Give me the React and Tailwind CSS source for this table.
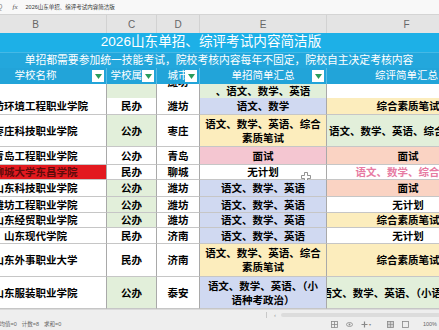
import React from "react";

const GREEN = "bg-[#e2efda]";
const BLUE = "bg-[#d0d9f1]";
const YELLOW = "bg-[#fcedbd]";
const PINK = "bg-[#f4c6d1]";
const SALMON = "bg-[#fad3c3]";
const WHITE = "bg-white";

const rows = [
  { h: "h-[14px]", name: "", type: "", city: "潍坊", cityCut: true, c: GREEN, e: ["、语文、数学、英语"], eBg: GREEN, f: [], fBg: WHITE },
  { h: "h-[17px]", name: "潍坊环境工程职业学院", type: "民办", city: "潍坊", c: WHITE, e: ["语文、数学"], eBg: BLUE, f: ["综合素质笔试"], fBg: YELLOW },
  { h: "h-[32px]", name: "枣庄科技职业学院", type: "公办", city: "枣庄", c: GREEN, e: ["语文、数学、英语、综合", "素质笔试"], eBg: YELLOW, f: ["语文、数学、英语、综合素质笔试"], fBg: GREEN, fLeft: true },
  { h: "h-[18px]", name: "青岛工程职业学院", type: "公办", city: "青岛", c: WHITE, e: ["面试"], eBg: PINK, f: ["面试"], fBg: SALMON },
  { h: "h-[15px]", name: "聊城大学东昌学院", red: true, type: "民办", city: "聊城", c: WHITE, e: ["无计划"], eBg: WHITE, f: ["语文、数学、综合素质"], fBg: WHITE, fPink: true, cursor: true },
  { h: "h-[17px]", name: "山东科技职业学院", type: "公办", city: "潍坊", c: GREEN, e: ["语文、数学、英语"], eBg: BLUE, f: ["面试"], fBg: SALMON },
  { h: "h-[16px]", name: "潍坊工程职业学院", type: "公办", city: "潍坊", c: GREEN, e: ["语文、数学、英语"], eBg: BLUE, f: ["无计划"], fBg: WHITE },
  { h: "h-[15px]", name: "山东经贸职业学院", type: "公办", city: "潍坊", c: GREEN, e: ["语文、数学、英语"], eBg: BLUE, f: ["综合素质笔试"], fBg: YELLOW },
  { h: "h-[16px]", name: "山东现代学院", type: "民办", city: "济南", c: WHITE, e: ["语文、数学、英语"], eBg: BLUE, f: ["无计划"], fBg: WHITE },
  { h: "h-[33px]", name: "山东外事职业大学", type: "民办", city: "济南", c: WHITE, e: ["语文、数学、英语、综合", "素质笔试"], eBg: YELLOW, f: ["综合素质笔试"], fBg: YELLOW },
  { h: "h-[32px]", name: "山东服装职业学院", type: "公办", city: "泰安", c: GREEN, e: ["语文、数学、英语、（小", "语种考政治）"], eBg: BLUE, f: ["语文、数学、英语、（小语种考政治）"], fBg: GREEN },
];

const COLS = "grid grid-cols-[142px_50px_43px_127px_160px]";
const CELL = "flex flex-col justify-center overflow-hidden whitespace-nowrap border-r border-b border-r-[#a9a9a9] border-b-[#c6c6c6] leading-[14px]";

function Filter() {
  return (
    <span className="absolute right-[2px] top-[2px] flex h-[12px] w-[12px] items-center justify-center bg-white">
      <svg width="7" height="5" viewBox="0 0 7 5">
        <path d="M0 0h7L3.5 5z" fill="#2a9c5c" />
      </svg>
    </span>
  );
}

function Lines({ lines }) {
  return lines.map((t, i) => <span key={i}>{t}</span>);
}

export default function App() {
  return (
    <div className="flex h-[330px] w-[439px] flex-col overflow-hidden bg-white font-['Liberation_Sans','Noto_Sans_CJK_SC',sans-serif]">
      {/* formula bar */}
      <div className="flex h-[15px] shrink-0 items-center border-b border-[#d4d4d4] bg-[#f8f8f8] text-[#333]">
        <span className="ml-[-3px] text-[7px] text-[#888]">Q</span>
        <span className="ml-[10px] font-['Liberation_Serif',serif] text-[7px] italic text-[#555]">fx</span>
        <span className="ml-[8px] text-[5.5px]">2026山东单招、综评考试内容简洁版</span>
      </div>

      <div className="flex-1 overflow-hidden">
        <div className="ml-[-35px] w-[522px]">
          {/* column letters */}
          <div className={`${COLS} h-[18px] bg-[#e4e4e4] text-[10px] text-[#666]`}>
            {["B", "C", "D", "E", "F"].map((l) => (
              <div key={l} className="flex items-center justify-center border-r border-[#d2d2d2]">{l}</div>
            ))}
          </div>

          {/* title */}
          <div className="flex h-[19px] items-center justify-center bg-[#1db0e7] pr-[30px] text-[13.6px] text-white">
            2026山东单招、综评考试内容简洁版
          </div>
          <div className="flex h-[16px] items-center justify-center border-t border-[#45b9e6] bg-[#23a7dc] pr-[14px] text-[10.8px] text-white">
            单招都需要参加统一技能考试，院校考核内容每年不固定，院校自主决定考核内容
          </div>

          {/* header */}
          <div className={`${COLS} h-[16px] bg-[#22a4d9] text-[10.5px] text-white`}>
            {["学校名称", "学校属性", "城市", "单招简单汇总", "综评简单汇总"].map((t, i) => (
              <div key={t} className="relative flex items-center justify-center overflow-hidden whitespace-nowrap border-r border-[#5cbde4]">
                {t}
                {i < 4 && <Filter />}
              </div>
            ))}
          </div>

          {/* data rows */}
          {rows.map((r, i) => (
            <div key={i} className={`${COLS} ${r.h} text-[10.5px] font-bold text-black`}>
              <div className={`${CELL} items-center ${r.red ? "bg-[#e3191f] text-[#5e0b0b]" : "bg-white"}`}>{r.name}</div>
              <div className={`${CELL} items-center ${r.c}`}>{r.type}</div>
              <div className={`${CELL} items-center bg-white ${r.cityCut ? "justify-start" : ""}`}>
                <span className={r.cityCut ? "mt-[-9px]" : ""}>{r.city}</span>
              </div>
              <div className={`${CELL} relative items-center overflow-visible ${r.eBg}`}>
                <Lines lines={r.e} />
                {r.cursor && (
                  <svg className="absolute left-[101px] top-[7px]" width="10" height="10" viewBox="0 0 10 10">
                    <path d="M3.5 0.5h3v3h3v3h-3v3h-3v-3h-3v-3h3z" fill="#fff" stroke="#777" strokeWidth="0.8" />
                  </svg>
                )}
              </div>
              <div className={`${CELL} ${r.fLeft ? "items-start pl-[2px]" : "items-center pl-[3px]"} ${r.fBg} ${r.fPink ? "text-[#e77aa2]" : ""}`}>
                <Lines lines={r.f} />
              </div>
            </div>
          ))}
        </div>
      </div>

      {/* bottom bars */}
      <div className="h-[21px] shrink-0 bg-[#eeeeee]">
        <div className="flex h-[10px] items-center border-t border-[#dadada] pl-[266px]">
          <span className="h-[6px] w-px bg-[#c8c8c8]" />
          <span className="ml-[7px] text-[6px] leading-none text-[#999]">‹</span>
          <span className="ml-[5px] h-[4px] flex-1 rounded-l-full bg-[#dcdcdc]" />
        </div>
        <div className="flex h-[11px] items-center text-[5.5px] text-[#666]">
          <span className="ml-[-6px]">平均值=0</span>
          <span className="ml-[5px]">计数=8</span>
          <span className="ml-[5px]">求和=0</span>
          <div className="ml-auto flex items-center gap-[8px] pr-[2px] text-[#888]">
            <svg width="7" height="7" viewBox="0 0 7 7"><rect x="0.5" y="0.5" width="6" height="6" fill="none" stroke="#888" strokeWidth="0.8" /><path d="M0.5 3.5h6M3.5 0.5v6" stroke="#888" strokeWidth="0.8" /></svg>
            <svg width="7" height="7" viewBox="0 0 7 7"><ellipse cx="3.5" cy="3.5" rx="3" ry="2" fill="none" stroke="#888" strokeWidth="0.8" /><circle cx="3.5" cy="3.5" r="0.9" fill="#888" /></svg>
            <span className="flex items-center">
              <svg width="7" height="7" viewBox="0 0 7 7"><path d="M3.5 0.5v6M0.5 3.5h6" stroke="#888" strokeWidth="1.2" /></svg>
              <span className="ml-[1px] text-[4px]">▾</span>
            </span>
            <svg className="ml-[8px]" width="7" height="7" viewBox="0 0 7 7"><rect x="0.5" y="0.5" width="6" height="6" fill="#d0d0d0" stroke="#888" strokeWidth="0.8" /><path d="M0.5 3.5h6M3.5 0.5v6" stroke="#888" strokeWidth="0.6" /></svg>
            <svg width="7" height="7" viewBox="0 0 7 7"><rect x="0.5" y="0.5" width="6" height="6" fill="none" stroke="#888" strokeWidth="0.8" /></svg>
            <span className="ml-[6px] text-[5.5px] text-[#666]">100%</span>
          </div>
        </div>
      </div>
    </div>
  );
}
